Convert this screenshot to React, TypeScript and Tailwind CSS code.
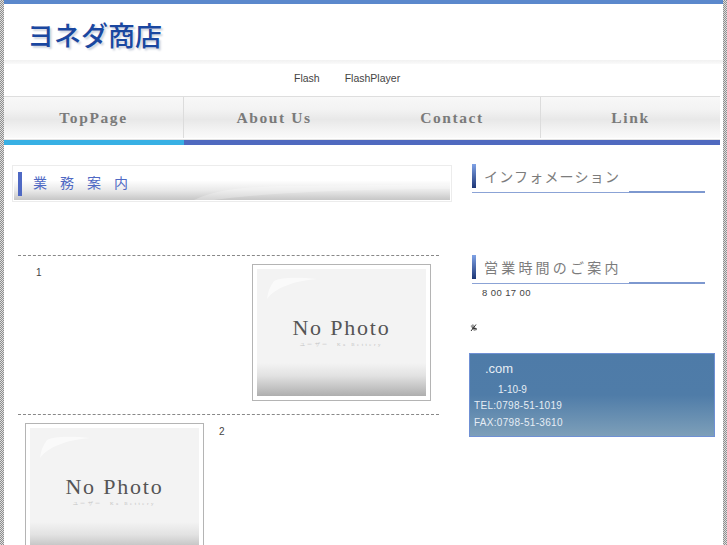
const sans = "font-['Liberation_Sans','Noto_Sans_CJK_JP',sans-serif]";

const navItems = [
  { label: "TopPage", width: "w-[180px]", divider: true },
  { label: "About Us", width: "w-[180px]", divider: false },
  { label: "Contact", width: "w-[177px]", divider: true },
  { label: "Link", width: "w-[179px]", divider: false },
];

const Stripe = () => (
  <div className="w-[4px] shrink-0 bg-[image:repeating-conic-gradient(#8f8f8f_0_25%,#dedede_0_50%)] bg-size-[2px_2px]" />
);

// placeholder picture used by each service row
const NoPhoto = () => (
  <div className="w-[179px] h-[137px] shrink-0 border border-[#b4b4b4] bg-white p-[4px]">
    <div className="relative h-[127px] overflow-hidden bg-[linear-gradient(to_bottom,#f3f3f3_0%,#f3f3f3_74%,#e2e2e2_84%,#aeaeae_100%)]">
      <svg className="absolute left-0 top-0" width="70" height="40" viewBox="0 0 70 40">
        <path d="M10 30 C18 19 36 12 60 10 C42 8 24 8 17 12 Q11 20 10 30 Z" fill="#ffffff" opacity="0.6" />
      </svg>
      <div className="absolute left-0 right-0 top-[47px] text-center font-['Liberation_Serif',serif] text-[22px] leading-[24px] tracking-[1.8px] text-[#555]">
        No Photo
      </div>
      <div className="absolute left-0 right-0 top-[73px] text-center font-['Liberation_Serif',serif] text-[5px] leading-[6px] tracking-[2.4px] text-[#c4c4c4]">
        ユーザー　Ka Bettery
      </div>
    </div>
  </div>
);

const SideHeading = ({ text, tracking }: { text: string; tracking: string }) => (
  <div className="h-[29px] w-[233px] ml-[3px]">
    <div className="flex h-[27px] items-start">
      <div className="w-[4px] h-[24px] bg-[linear-gradient(to_bottom,#7fa2e6,#1d3676)]" />
      <div className={`ml-[8px] mt-[5px] text-[14px] leading-[17px] text-[#7c7c7c] ${tracking}`}>{text}</div>
    </div>
    <div className="flex h-[2px] items-end">
      <div className="h-px w-[157px] bg-[#8ba3d6]" />
      <div className="h-[2px] w-[76px] bg-[#7d98cf]" />
    </div>
  </div>
);

export default function App() {
  return (
    <div className={`flex h-[545px] w-[727px] overflow-hidden bg-white ${sans}`}>
      <Stripe />
      <div className="w-[719px] shrink-0">
        <div className="h-[4px] bg-[#5b88cc]" />
        <div className="h-[56px] pl-[23px] pt-[13px]">
          <div className="text-[27px] leading-[36px] font-medium text-[#1a47a0] [text-shadow:2px_2px_2px_#d0d5df] font-['Noto_Sans_CJK_JP',serif]">
            ヨネダ商店
          </div>
        </div>
        <div className="h-[4px] bg-[linear-gradient(to_bottom,#f1f1f1,#fafafa)]" />

        {/* links */}
        <div className="flex h-[32px] items-center gap-[25px] pl-[290px] pb-[4px] text-[10.5px] leading-[12px] text-[#444]">
          <span>Flash</span>
          <span>FlashPlayer</span>
        </div>

        {/* nav */}
        <div className="flex w-[716px] h-[42px] border-t border-[#dedede] bg-[linear-gradient(to_bottom,#f8f8f8_0%,#f3f3f3_30%,#e8e8e8_55%,#f3f3f3_80%,#fafafa_100%)]">
          {navItems.map((item) => (
            <div
              key={item.label}
              className={`${item.width} flex items-center justify-center font-['Liberation_Serif',serif] text-[15.5px] font-bold tracking-[1.6px] text-[#7a7a7a] ${item.divider ? "border-r border-[#dcdcdc]" : ""}`}
            >
              {item.label}
            </div>
          ))}
        </div>
        <div className="h-px w-[716px] mt-[1px] bg-[#e3e3e3]" />
        <div className="flex w-[716px] h-[5px]">
          <div className="w-[180px] bg-[#38b0e4]" />
          <div className="flex-1 bg-[#4f69bf]" />
        </div>

        <div className="flex pt-[19px]">
          {/* left column */}
          <div className="ml-[8px] mt-[1px] w-[440px] shrink-0">
            <div className="border border-[#ececec] p-px">
              <div className="relative flex h-[33px] items-center overflow-hidden bg-[linear-gradient(to_bottom,#ffffff_0%,#ffffff_40%,#e8e8e8_72%,#c6c6c6_100%)] pl-[4px]">
                <svg className="absolute bottom-0 left-[170px]" width="268" height="16" viewBox="0 0 268 16" preserveAspectRatio="none">
                  <path d="M10 16 C30 6 60 2 110 2 L268 0 L268 5 C180 5 90 8 30 16 Z" fill="#ffffff" opacity="0.25" />
                </svg>
                <div className="w-[4px] h-[24px] bg-[#4f69c4]" />
                <div className="ml-[11px] mb-[2px] text-[14px] leading-[18px] tracking-[13px] text-[#4f69c4]">業務案内</div>
              </div>
            </div>

            <div className="ml-[6px] mt-[53px] w-[421px] border-t border-dashed border-[#888]" />
            <div className="ml-[6px] flex w-[421px] justify-between pl-[18px] pr-[8px] pt-[8px]">
              <div className="pt-[3px] text-[10px] leading-[12px] text-[#444]">1</div>
              <NoPhoto />
            </div>
            <div className="ml-[6px] mt-[13px] w-[421px] border-t border-dashed border-[#888]" />
            <div className="ml-[13px] flex gap-[15px] pt-[8px]">
              <NoPhoto />
              <div className="pt-[3px] text-[10px] leading-[12px] text-[#444]">2</div>
            </div>
          </div>

          {/* right column */}
          <div className="ml-[17px] w-[246px] shrink-0">
            <SideHeading text="インフォメーション" tracking="tracking-[1.2px]" />
            <div className="mt-[62px]">
              <SideHeading text="営業時間のご案内" tracking="tracking-[3.2px]" />
            </div>
            <div className="ml-[13px] mt-[1px] text-[9.5px] leading-[16px] tracking-[0.4px] text-[#444]">8 00 17 00</div>
            <svg className="mt-[22px] ml-[1px]" width="8" height="9" viewBox="0 0 8 9">
              <path d="M0.5 3 L3 1 L7 7 L4 8 Z" fill="#9a9a9a" />
              <path d="M1 8 L6 1.5 M2 5 L7 6" stroke="#333" strokeWidth="1" fill="none" />
            </svg>
            <div className="mt-[21px] h-[84px] w-[246px] border border-[#6f90d4] bg-[linear-gradient(to_bottom,#4e7ba8_0%,#4f7ca8_50%,#7d9fb9_100%)] text-[#e6edf4]">
              <div className="pl-[15px] pt-[7px] text-[13px] leading-[16px]">.com</div>
              <div className="pl-[28px] pt-[5px] text-[10px] leading-[16px]">1-10-9</div>
              <div className="pl-[4px] text-[10px] leading-[16px] tracking-[0.3px]">TEL:0798-51-1019</div>
              <div className="pl-[4px] pt-[1px] text-[10px] leading-[16px] tracking-[0.3px]">FAX:0798-51-3610</div>
            </div>
          </div>
        </div>
      </div>
      <Stripe />
    </div>
  );
}
